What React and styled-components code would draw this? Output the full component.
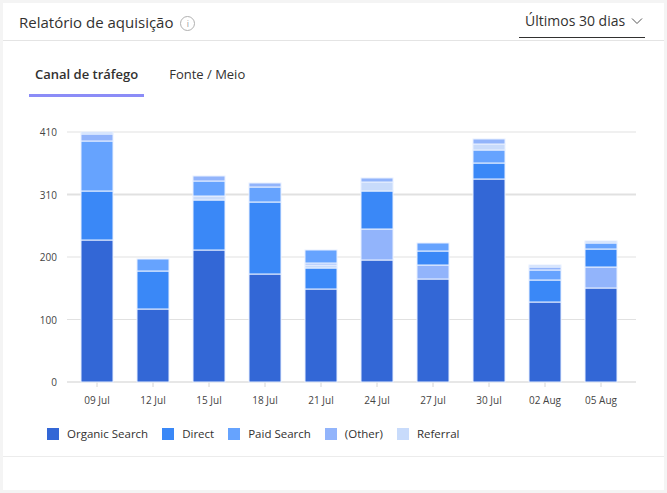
import styled, { createGlobalStyle } from "styled-components";

const GlobalStyle = createGlobalStyle`
  body {
    margin: 0;
    background: #f4f4f4;
    font-family: "Open Sans", "Noto Sans", sans-serif;
    color: #323130;
  }
`;

const COLORS = {
    organic: "#3367d6",
    direct: "#3a88f7",
    paid: "#66a3fe",
    other: "#92b4fb",
    referral: "#c8dbfb",
};

// segment pixel heights from the bottom up: [key, height]
const BARS = [
    { label: "09 Jul", segs: [["organic", 142], ["direct", 49], ["paid", 50], ["other", 7], ["referral", 2]] },
    { label: "12 Jul", segs: [["organic", 73], ["direct", 38], ["paid", 12]] },
    { label: "15 Jul", segs: [["organic", 132], ["direct", 50], ["referral", 4], ["paid", 15], ["other", 5]] },
    { label: "18 Jul", segs: [["organic", 108], ["direct", 72], ["paid", 15], ["other", 4]] },
    { label: "21 Jul", segs: [["organic", 93], ["direct", 21], ["referral", 3], ["other", 2], ["paid", 13]] },
    { label: "24 Jul", segs: [["organic", 122], ["other", 31], ["direct", 38], ["referral", 9], ["other", 4]] },
    { label: "27 Jul", segs: [["organic", 103], ["other", 14], ["direct", 14], ["paid", 8]] },
    { label: "30 Jul", segs: [["organic", 203], ["direct", 16], ["paid", 13], ["referral", 6], ["other", 5]] },
    { label: "02 Aug", segs: [["organic", 80], ["direct", 22], ["paid", 10], ["other", 3], ["referral", 2]] },
    { label: "05 Aug", segs: [["organic", 94], ["other", 21], ["direct", 18], ["paid", 6], ["referral", 2]] },
];

const TICKS = ["410", "310", "200", "100", "0"];

const LEGEND = [
    ["organic", "Organic Search"],
    ["direct", "Direct"],
    ["paid", "Paid Search"],
    ["other", "(Other)"],
    ["referral", "Referral"],
];

const Chart = () => {
    const top = 12;
    const base = 262;
    return (
        <ChartSvg width="661" height="300" viewBox="0 0 661 300">
            {TICKS.map((t, i) => {
                const y = top + i * 62.5;
                return (
                    <g key={t}>
                        <line x1="64" x2="633" y1={y} y2={y} stroke={i === 4 ? "#cfcfcf" : "#e1e1e1"} strokeWidth={i === 1 ? 2 : 1} />
                        <text x="54" y={y + 4} textAnchor="end" fontSize="10" fill="#444">{t}</text>
                    </g>
                );
            })}
            {BARS.map((b, i) => {
                const cx = 94 + i * 56;
                let y = base;
                return (
                    <g key={b.label}>
                        <line x1={cx} x2={cx} y1={base} y2={base + 5} stroke="#d6d6d6" />
                        {b.segs.map(([k, h], j) => {
                            y -= h;
                            return (
                                <rect key={j} x={cx - 16} y={y} width="32" height={h} fill={COLORS[k]} stroke="#e8f0ff" strokeWidth="1" />
                            );
                        })}
                        <text x={cx} y={base + 22} textAnchor="middle" fontSize="10" fill="#444">{b.label}</text>
                    </g>
                );
            })}
        </ChartSvg>
    );
};

const App = () => (
    <>
        <GlobalStyle />
        <Card>
            <Header>
                <Title>
                    Relatório de aquisição
                    <InfoIcon>i</InfoIcon>
                </Title>
                <Dropdown>
                    Últimos 30 dias
                    <svg width="12" height="8" viewBox="0 0 12 8">
                        <path d="M1 1.5 L6 6.5 L11 1.5" fill="none" stroke="#555" strokeWidth="1" />
                    </svg>
                </Dropdown>
            </Header>
            <Tabs>
                <Tab active>Canal de tráfego</Tab>
                <Tab>Fonte / Meio</Tab>
            </Tabs>
            <Chart />
            <Legend>
                {LEGEND.map(([k, name]) => (
                    <LegendItem key={k}>
                        <Swatch color={COLORS[k]} />
                        {name}
                    </LegendItem>
                ))}
            </Legend>
            <Footer />
        </Card>
    </>
);

const Card = styled.div`
  margin: 3px;
  width: 661px;
  height: 487px;
  background: #fff;
  display: flex;
  flex-direction: column;
`;

const Header = styled.div`
  height: 38px;
  border-bottom: 1px solid #e4e4e4;
  display: flex;
  align-items: center;
  justify-content: space-between;
  padding: 0 19px 0 16px;
  box-sizing: border-box;
`;

const Title = styled.div`
  font-size: 15px;
  color: #323130;
  display: flex;
  align-items: center;
  gap: 7px;
`;

const InfoIcon = styled.span`
  width: 13px;
  height: 13px;
  border: 1px solid #b0b0b0;
  border-radius: 50%;
  font-size: 9px;
  color: #a0a0a0;
  display: inline-flex;
  align-items: center;
  justify-content: center;
  margin-top: 3px;
`;

const Dropdown = styled.div`
  align-self: flex-end;
  height: 34px;
  width: 126px;
  box-sizing: border-box;
  border-bottom: 1px solid #323130;
  font-size: 14px;
  display: flex;
  align-items: center;
  justify-content: space-between;
  padding: 0 2px 0 6px;
  margin-bottom: 2px;
`;

const Tabs = styled.div`
  display: flex;
  padding: 18px 0 0 26px;
`;

const Tab = styled.div`
  font-size: 13px;
  font-weight: ${(p) => (p.active ? 600 : 400)};
  color: #323130;
  padding: 6px 6px 11px;
  margin-right: 19px;
  border-bottom: 3px solid ${(p) => (p.active ? "#8b8cf7" : "transparent")};
`;

const ChartSvg = styled.svg`
  display: block;
  margin-top: 23px;
  font-family: "Open Sans", sans-serif;
`;

const Legend = styled.div`
  display: flex;
  gap: 14px;
  padding: 0 0 0 44px;
  margin-top: 0;
  font-size: 11.5px;
  height: 27px;
  align-items: center;
`;

const LegendItem = styled.div`
  display: flex;
  align-items: center;
  gap: 8px;
`;

const Swatch = styled.span`
  width: 12px;
  height: 12px;
  background: ${(p) => p.color};
`;

const Footer = styled.div`
  margin-top: 9px;
  border-top: 1px solid #ececec;
`;

export default App;
